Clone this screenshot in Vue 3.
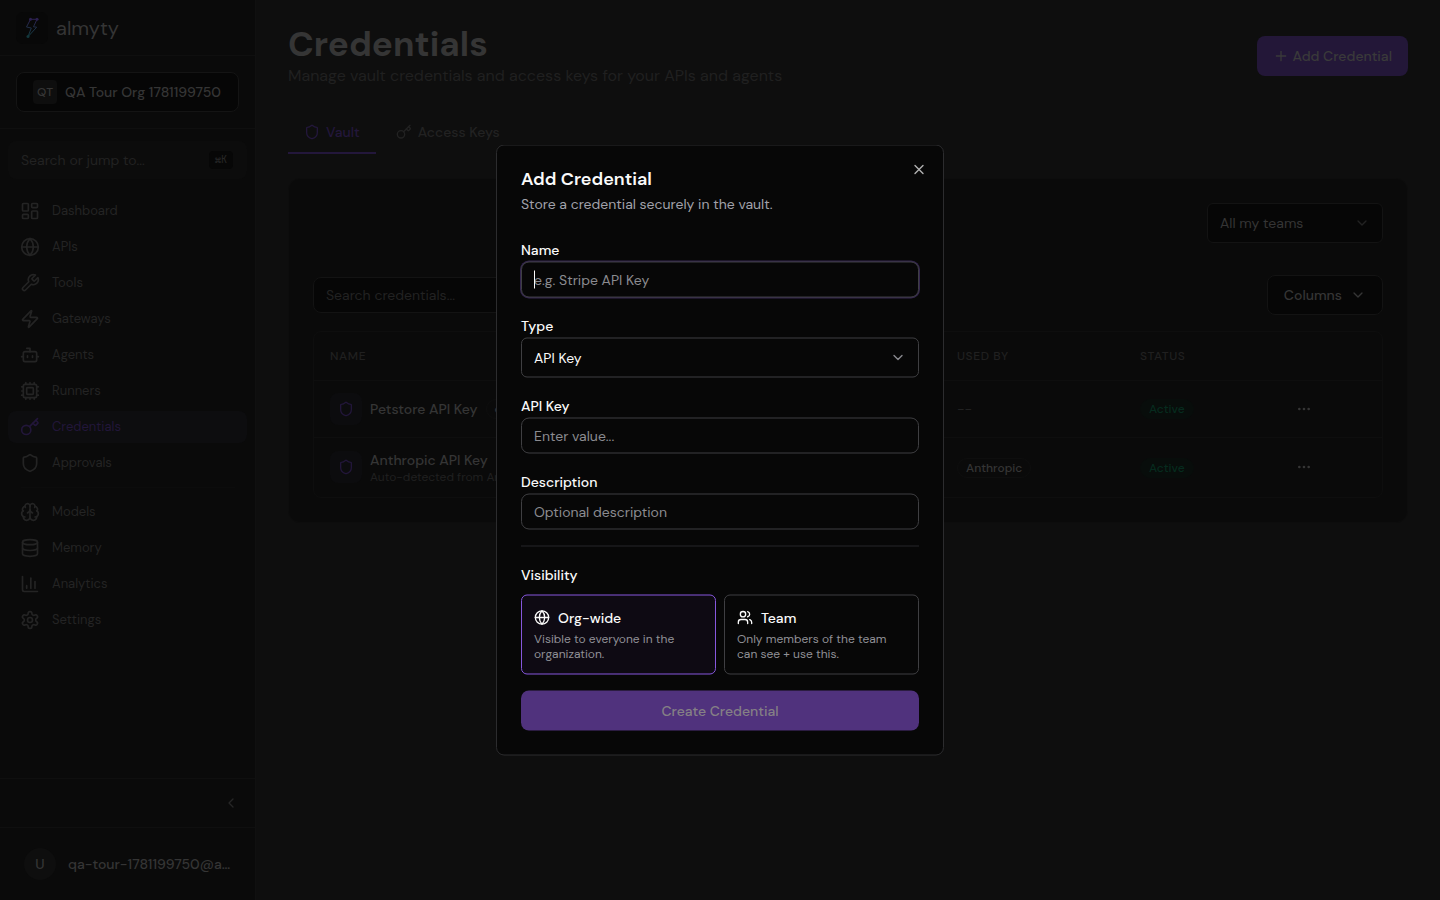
<template>
  <div class="app">
    <aside class="sidebar">
      <div class="brand">
        <svg class="brand-mark" viewBox="0 0 32 32" fill="none" stroke-width="1">
          <rect width="32" height="32" rx="7" fill="#080808" />
          <path d="M14.5 7.3H21L17.5 14.800 20.700 15.200 12 24.700 15.300 16 10.500 15Z" stroke="url(#bolt)" />
          <circle cx="14.500" cy="7.300" r="1.500" fill="#2b2050" />
          <circle cx="21" cy="7.300" r="1.500" fill="#2b2050" />
          <circle cx="12" cy="24.500" r="1.500" fill="#12383c" />
          <defs>
            <linearGradient id="bolt" x1="0" y1="0" x2="0" y2="1">
              <stop offset="0" stop-color="#2e2250" />
              <stop offset="1" stop-color="#113d40" />
            </linearGradient>
          </defs>
        </svg>
        <span class="brand-name">almyty</span>
      </div>

      <div class="org">
        <button class="org-button" type="button">
          <span class="org-badge">QT</span>
          <span>QA Tour Org 1781199750</span>
        </button>
      </div>

      <button class="jump" type="button">
        <span>Search or jump to...</span>
        <kbd>⌘K</kbd>
      </button>

      <nav class="nav">
        <template v-for="item in navItems" :key="item.label">
          <hr v-if="item.divider" />
          <a href="#" class="nav-link" :class="{ 'nav-link--active': item.active }">
            <svg class="icon icon--20" viewBox="0 0 24 24" v-html="icons[item.icon]"></svg>
            <span>{{ item.label }}</span>
          </a>
        </template>
      </nav>

      <div class="collapse">
        <button type="button" aria-label="Collapse sidebar">
          <svg class="icon icon--16" viewBox="0 0 24 24" v-html="icons.chevronLeft"></svg>
        </button>
      </div>

      <div class="user">
        <span class="avatar">U</span>
        <span class="user-name">qa-tour-1781199750@almyty.com</span>
      </div>
    </aside>

    <main class="main">
      <header class="page-header">
        <div>
          <h1>Credentials</h1>
          <p>Manage vault credentials and access keys for your APIs and agents</p>
        </div>
        <button class="add-button" type="button">
          <svg class="icon icon--16" viewBox="0 0 24 24" v-html="icons.plus"></svg>
          Add Credential
        </button>
      </header>

      <div class="tabs">
        <button class="tab tab--active" type="button">
          <svg class="icon icon--16" viewBox="0 0 24 24" v-html="icons.shield"></svg>
          Vault
        </button>
        <button class="tab" type="button">
          <svg class="icon icon--16" viewBox="0 0 24 24" v-html="icons.key"></svg>
          Access Keys
        </button>
      </div>

      <section class="card">
        <div class="select-wrap team-select">
          <select v-model="team" aria-label="Team">
            <option>All my teams</option>
          </select>
          <svg class="icon icon--16" viewBox="0 0 24 24" v-html="icons.chevronDown"></svg>
        </div>

        <div class="toolbar">
          <input v-model="search" type="text" placeholder="Search credentials..." aria-label="Search credentials" />
          <button class="columns-button" type="button">
            Columns
            <svg class="icon icon--16" viewBox="0 0 24 24" v-html="icons.chevronDown"></svg>
          </button>
        </div>

        <div class="table-wrap">
          <table>
            <colgroup>
              <col class="col-name" />
              <col class="col-used" />
              <col class="col-status" />
              <col />
            </colgroup>
            <thead>
              <tr>
                <th>Name</th>
                <th>Used by</th>
                <th>Status</th>
                <th></th>
              </tr>
            </thead>
            <tbody>
              <tr v-for="row in credentials" :key="row.name">
                <td>
                  <div class="cred">
                    <span class="cred-icon">
                      <svg class="icon icon--16" viewBox="0 0 24 24" v-html="icons.shield"></svg>
                    </span>
                    <div>
                      <div class="cred-name">
                        {{ row.name }}
                        <span v-if="row.scope" class="pill">{{ row.scope }}</span>
                      </div>
                      <div v-if="row.note" class="cred-note">{{ row.note }}</div>
                    </div>
                  </div>
                </td>
                <td>
                  <span v-if="row.usedBy" class="pill">{{ row.usedBy }}</span>
                  <span v-else class="muted">--</span>
                </td>
                <td><span class="pill pill--active">Active</span></td>
                <td>
                  <button class="more" type="button" aria-label="Actions">
                    <svg class="icon icon--16" viewBox="0 0 24 24" v-html="icons.more"></svg>
                  </button>
                </td>
              </tr>
            </tbody>
          </table>
        </div>
      </section>
    </main>

    <div class="dialog" role="dialog" aria-labelledby="dialog-title">
      <button class="close" type="button" aria-label="Close">
        <svg class="icon icon--16" viewBox="0 0 24 24" v-html="icons.x"></svg>
      </button>
      <h2 id="dialog-title">Add Credential</h2>
      <p class="dialog-text">Store a credential securely in the vault.</p>

      <form @submit.prevent>
        <div class="field">
          <label for="name">Name</label>
          <div class="name-box">
            <input
              id="name"
              ref="nameInput"
              v-model="form.name"
              type="text"
              placeholder="e.g. Stripe API Key"
              :class="{ empty: !form.name }"
            />
            <span v-if="!form.name" class="caret"></span>
          </div>
        </div>
        <div class="field">
          <label for="type">Type</label>
          <div class="select-wrap">
            <select id="type" v-model="form.type">
              <option>API Key</option>
            </select>
            <svg class="icon icon--16" viewBox="0 0 24 24" v-html="icons.chevronDown"></svg>
          </div>
        </div>
        <div class="field">
          <label for="value">API Key</label>
          <input id="value" v-model="form.value" type="password" placeholder="Enter value..." />
        </div>
        <div class="field">
          <label for="description">Description</label>
          <input id="description" v-model="form.description" type="text" placeholder="Optional description" />
        </div>

        <div class="visibility">
          <div id="visibility-label" class="visibility-label">Visibility</div>
          <div class="options" role="group" aria-labelledby="visibility-label">
            <button
              v-for="option in visibilityOptions"
              :key="option.id"
              type="button"
              class="option"
              :class="{ 'option--selected': form.visibility === option.id }"
              @click="form.visibility = option.id"
            >
              <span class="option-title">
                <svg class="icon icon--16" viewBox="0 0 24 24" v-html="icons[option.icon]"></svg>
                {{ option.title }}
              </span>
              <span class="option-text">{{ option.text }}</span>
            </button>
          </div>
        </div>

        <button class="submit" type="submit" :disabled="!form.name || !form.value">Create Credential</button>
      </form>
    </div>
  </div>
</template>

<script setup>
import { ref, reactive, onMounted } from 'vue'

const icons = {
  dashboard: '<rect width="7" height="9" x="3" y="3" rx="1"/><rect width="7" height="5" x="14" y="3" rx="1"/><rect width="7" height="9" x="14" y="12" rx="1"/><rect width="7" height="5" x="3" y="16" rx="1"/>',
  globe: '<circle cx="12" cy="12" r="10"/><path d="M12 2a14.5 14.5 0 0 0 0 20 14.5 14.5 0 0 0 0-20"/><path d="M2 12h20"/>',
  wrench: '<path d="M14.7 6.3a1 1 0 0 0 0 1.4l1.6 1.6a1 1 0 0 0 1.4 0l3.77-3.77a6 6 0 0 1-7.94 7.94l-6.91 6.91a2.12 2.12 0 0 1-3-3l6.91-6.91a6 6 0 0 1 7.94-7.94l-3.76 3.76z"/>',
  zap: '<path d="M4 14a1 1 0 0 1-.78-1.63l9.9-10.2a.5.5 0 0 1 .86.46l-1.92 6.02A1 1 0 0 0 13 10h7a1 1 0 0 1 .78 1.63l-9.9 10.2a.5.5 0 0 1-.86-.46l1.92-6.02A1 1 0 0 0 11 14z"/>',
  bot: '<path d="M12 8V4H8"/><rect width="16" height="12" x="4" y="8" rx="2"/><path d="M2 14h2"/><path d="M20 14h2"/><path d="M15 13v2"/><path d="M9 13v2"/>',
  cpu: '<rect width="16" height="16" x="4" y="4" rx="2"/><rect width="8" height="8" x="8" y="8" rx="1"/><path d="M12 20v2M12 2v2M17 20v2M17 2v2M2 12h2M2 17h2M2 7h2M20 12h2M20 17h2M20 7h2M7 20v2M7 2v2"/>',
  key: '<path d="m15.5 7.5 2.3 2.3a1 1 0 0 0 1.4 0l2.1-2.1a1 1 0 0 0 0-1.4L19 4"/><path d="m21 2-9.6 9.6"/><circle cx="7.5" cy="15.5" r="5.500"/>',
  shield: '<path d="M20 13c0 5-3.5 7.5-7.66 8.95a1 1 0 0 1-.67-.01C7.5 20.5 4 18 4 13V6a1 1 0 0 1 1-1c2 0 4.5-1.2 6.24-2.72a1.17 1.17 0 0 1 1.52 0C14.51 3.81 17 5 19 5a1 1 0 0 1 1 1z"/>',
  brain: '<path d="M12 18V5"/><path d="M15 13a4.17 4.17 0 0 1-3-4 4.17 4.17 0 0 1-3 4"/><path d="M17.598 6.5A3 3 0 1 0 12 5a3 3 0 1 0-5.598 1.5"/><path d="M17.997 5.125a4 4 0 0 1 2.526 5.77"/><path d="M18 18a4 4 0 0 0 2-7.464"/><path d="M19.967 17.483A4 4 0 1 1 12 18a4 4 0 1 1-7.967-.517"/><path d="M6 18a4 4 0 0 1-2-7.464"/><path d="M6.003 5.125a4 4 0 0 0-2.526 5.77"/>',
  database: '<ellipse cx="12" cy="5" rx="9" ry="3"/><path d="M3 5V19A9 3 0 0 0 21 19V5"/><path d="M3 12A9 3 0 0 0 21 12"/>',
  chart: '<path d="M3 3v16a2 2 0 0 0 2 2h16"/><path d="M18 17V9"/><path d="M13 17V5"/><path d="M8 17v-3"/>',
  settings: '<path d="M12.22 2h-.44a2 2 0 0 0-2 2v.18a2 2 0 0 1-1 1.73l-.43.25a2 2 0 0 1-2 0l-.15-.08a2 2 0 0 0-2.73.73l-.22.38a2 2 0 0 0 .73 2.73l.15.1a2 2 0 0 1 1 1.72v.51a2 2 0 0 1-1 1.74l-.15.09a2 2 0 0 0-.73 2.73l.22.38a2 2 0 0 0 2.73.73l.15-.08a2 2 0 0 1 2 0l.43.25a2 2 0 0 1 1 1.73V20a2 2 0 0 0 2 2h.44a2 2 0 0 0 2-2v-.18a2 2 0 0 1 1-1.73l.43-.25a2 2 0 0 1 2 0l.15.08a2 2 0 0 0 2.73-.73l.22-.39a2 2 0 0 0-.73-2.73l-.15-.08a2 2 0 0 1-1-1.74v-.5a2 2 0 0 1 1-1.74l.15-.09a2 2 0 0 0 .73-2.73l-.22-.38a2 2 0 0 0-2.73-.73l-.15.08a2 2 0 0 1-2 0l-.43-.25a2 2 0 0 1-1-1.73V4a2 2 0 0 0-2-2z"/><circle cx="12" cy="12" r="3"/>',
  users: '<path d="M16 21v-2a4 4 0 0 0-4-4H6a4 4 0 0 0-4 4v2"/><circle cx="9" cy="7" r="4"/><path d="M22 21v-2a4 4 0 0 0-3-3.87"/><path d="M16 3.13a4 4 0 0 1 0 7.75"/>',
  chevronLeft: '<path d="m15 18-6-6 6-6"/>',
  chevronDown: '<path d="m6 9 6 6 6-6"/>',
  plus: '<path d="M5 12h14M12 5v14"/>',
  x: '<path d="M18 6 6 18M6 6l12 12"/>',
  more: '<circle cx="12" cy="12" r="1"/><circle cx="19" cy="12" r="1"/><circle cx="5" cy="12" r="1"/>'
}

const navItems = [
  { label: 'Dashboard', icon: 'dashboard' },
  { label: 'APIs', icon: 'globe' },
  { label: 'Tools', icon: 'wrench' },
  { label: 'Gateways', icon: 'zap' },
  { label: 'Agents', icon: 'bot' },
  { label: 'Runners', icon: 'cpu' },
  { label: 'Credentials', icon: 'key', active: true },
  { label: 'Approvals', icon: 'shield' },
  { label: 'Models', icon: 'brain', divider: true },
  { label: 'Memory', icon: 'database' },
  { label: 'Analytics', icon: 'chart' },
  { label: 'Settings', icon: 'settings' }
]

const credentials = [
  { name: 'Petstore API Key', scope: 'org' },
  { name: 'Anthropic API Key', note: 'Auto-detected from Anthropic', usedBy: 'Anthropic' }
]

const visibilityOptions = [
  { id: 'org', icon: 'globe', title: 'Org-wide', text: 'Visible to everyone in the organization.' },
  { id: 'team', icon: 'users', title: 'Team', text: 'Only members of the team can see + use this.' }
]

const team = ref('All my teams')
const search = ref('')
const nameInput = ref(null)

const form = reactive({
  name: '',
  type: 'API Key',
  value: '',
  description: '',
  visibility: 'org'
})

onMounted(() => {
  nameInput.value.focus()
})
</script>

<style>
body {
  margin: 0;
  background: #0e0e0e;
}
</style>

<style scoped>
* {
  box-sizing: border-box;
}

.app {
  display: flex;
  min-height: 100vh;
  background: #0e0e0e;
  color: #353535;
  font-family: "DM Sans", Roboto, sans-serif;
  font-size: 14px;
  line-height: 20px;
}

button,
input,
select {
  font: inherit;
  color: inherit;
}

button {
  padding: 0;
  border: 0;
  background: none;
}

h1,
h2,
p {
  margin: 0;
}

.icon {
  flex-shrink: 0;
  fill: none;
  stroke: currentColor;
  stroke-width: 2;
  stroke-linecap: round;
  stroke-linejoin: round;
}

.icon--20 {
  width: 20px;
  height: 20px;
}

.icon--16 {
  width: 16px;
  height: 16px;
}

/* Sidebar */
.sidebar {
  display: flex;
  flex-direction: column;
  width: 256px;
  flex-shrink: 0;
  border-right: 1px solid #101010;
  background: #0a0a0a;
}

.brand {
  display: flex;
  align-items: center;
  gap: 8px;
  height: 56px;
  padding: 0 16px;
  border-bottom: 1px solid #0f0f0f;
}

.brand-mark {
  width: 32px;
  height: 32px;
}

.brand-name {
  font-size: 20px;
  line-height: 28px;
}

.org {
  padding: 16px;
  border-bottom: 1px solid #0f0f0f;
}

.org-button {
  display: flex;
  align-items: center;
  gap: 8px;
  width: 100%;
  height: 40px;
  padding: 0 16px;
  border: 1px solid #141414;
  border-radius: 8px;
  background: #060606;
  font-weight: 500;
}

.org-badge {
  display: grid;
  place-items: center;
  width: 24px;
  height: 24px;
  border-radius: 4px;
  background: #0e0e0e;
  font-size: 12px;
}

.jump {
  display: flex;
  align-items: center;
  justify-content: space-between;
  height: 38px;
  margin: 12px 8px 16px;
  padding: 0 14px 0 13px;
  border-radius: 8px;
  background: #0c0c0c;
  color: #222222;
}

.jump kbd {
  padding: 0 6px;
  border-radius: 4px;
  background: #070707;
  color: #282828;
  font-family: "JetBrains Mono", "Liberation Mono", monospace;
  font-size: 10px;
  line-height: 18px;
}

.nav {
  display: flex;
  flex-direction: column;
  gap: 4px;
  flex: 1;
  padding: 0 8px;
}

.nav hr {
  width: 214px;
  margin: 4px auto;
  border: 0;
  border-top: 1px solid #0c0c0c;
}

.nav-link {
  display: flex;
  align-items: center;
  gap: 12px;
  height: 32px;
  padding: 0 12px;
  border-radius: 8px;
  color: #242424;
  font-size: 13px;
  text-decoration: none;
}

.nav-link--active {
  background: #0d0d0f;
  color: #22163a;
}

.collapse {
  display: flex;
  justify-content: flex-end;
  align-items: center;
  height: 49px;
  padding: 0 16px;
  border-top: 1px solid #0f0f0f;
  color: #262626;
}

.collapse svg {
  display: block;
}

.user {
  display: flex;
  align-items: center;
  gap: 12px;
  height: 73px;
  padding: 0 24px;
  border-top: 1px solid #0f0f0f;
}

.avatar {
  display: grid;
  place-items: center;
  flex-shrink: 0;
  width: 32px;
  height: 32px;
  border-radius: 50%;
  background: #0e0e0e;
  font-weight: 500;
}

.user-name {
  overflow: hidden;
  text-overflow: ellipsis;
  white-space: nowrap;
  font-weight: 500;
}

/* Page */
.main {
  flex: 1;
  min-width: 0;
  padding: 24px 32px;
}

.page-header {
  display: flex;
  justify-content: space-between;
  align-items: center;
  margin-bottom: 24px;
}

h1 {
  font-size: 35px;
  font-weight: 700;
  line-height: 40px;
}

.page-header p {
  color: #202020;
  font-size: 16px;
  line-height: 24px;
}

.add-button {
  display: flex;
  align-items: center;
  gap: 4px;
  height: 40px;
  padding: 0 16px;
  border-radius: 8px;
  background: #231738;
  color: #3a3a3a;
  font-weight: 500;
}

.tabs {
  display: flex;
  gap: 4px;
  margin-bottom: 24px;
}

.tab {
  display: flex;
  align-items: center;
  gap: 6px;
  height: 42px;
  padding: 0 16px;
  border-bottom: 2px solid transparent;
  color: #222222;
  font-weight: 500;
}

.tab--active {
  border-color: #23173b;
  color: #23173b;
}

.card {
  padding: 24px;
  border: 1px solid #0d0d0d;
  border-radius: 12px;
  background: #0a0a0a;
}

.select-wrap {
  display: grid;
  align-items: center;
}

.select-wrap select {
  grid-area: 1 / 1;
  width: 100%;
  height: 40px;
  padding: 0 12px;
  border: 1px solid #3f3f42;
  border-radius: 6px;
  outline: none;
  background: #070707;
  appearance: none;
}

.select-wrap svg {
  grid-area: 1 / 1;
  justify-self: end;
  margin-right: 13px;
  pointer-events: none;
}

.team-select {
  width: 176px;
  margin: 0 0 32px auto;
}

.team-select select {
  border-color: #131313;
  background: #060606;
}

.team-select svg {
  color: #222222;
}

.toolbar {
  display: flex;
  justify-content: space-between;
  align-items: center;
  margin-bottom: 16px;
}

.toolbar input {
  width: 384px;
  height: 36px;
  padding: 0 12px;
  border: 1px solid #131313;
  border-radius: 8px;
  background: #060606;
}

.toolbar input::placeholder {
  color: #222222;
}

.columns-button {
  display: flex;
  align-items: center;
  gap: 8px;
  height: 40px;
  padding: 0 16px;
  border: 1px solid #131313;
  border-radius: 8px;
  background: #060606;
  font-weight: 500;
}

.table-wrap {
  border: 1px solid #0e0e0e;
  border-radius: 8px;
}

table {
  width: 100%;
  border-collapse: collapse;
  table-layout: fixed;
}

.col-name {
  width: 627px;
}

.col-used {
  width: 183px;
}

.col-status {
  width: 148px;
}

th {
  height: 48px;
  padding: 0 16px;
  border-bottom: 1px solid #0e0e0e;
  color: #202020;
  font-size: 12px;
  font-weight: 500;
  letter-spacing: 0.05em;
  text-align: left;
  text-transform: uppercase;
}

td {
  height: 57px;
  padding: 0 16px;
}

tbody tr + tr td {
  height: 60px;
  border-top: 1px solid #0e0e0e;
}

.cred {
  display: flex;
  align-items: center;
  gap: 8px;
}

.cred-icon {
  display: grid;
  place-items: center;
  width: 32px;
  height: 32px;
  border-radius: 8px;
  background: #0c0c0e;
  color: #22163a;
}

.cred-name {
  display: flex;
  align-items: center;
  gap: 8px;
  font-weight: 500;
}

.cred-note {
  color: #202020;
  font-size: 12px;
  line-height: 14px;
}

.pill {
  display: inline-block;
  padding: 0 8px;
  border: 1px solid #0e0e0e;
  border-radius: 10px;
  font-size: 12px;
  font-weight: 500;
  line-height: 18px;
}

.pill--active {
  border-color: #080d0b;
  background: #080d0b;
  color: #062b1e;
}

.muted {
  color: #222222;
}

.more {
  display: grid;
  place-items: center;
  width: 32px;
  height: 32px;
}

/* Dialog */
.dialog {
  position: fixed;
  top: 50%;
  left: 50%;
  width: 448px;
  max-width: 100%;
  padding: 24px;
  border: 1px solid #2c2c2e;
  border-radius: 8px;
  background: #070707;
  color: #fafafa;
  transform: translate(-50%, -50%);
}

.close {
  position: absolute;
  top: 16px;
  right: 16px;
  color: #b4b4b4;
}

.close svg {
  display: block;
}

h2 {
  margin-bottom: 6px;
  font-size: 18px;
  font-weight: 600;
  line-height: 18px;
}

.dialog-text {
  margin-bottom: 24px;
  color: #a1a1aa;
}

form {
  display: flex;
  flex-direction: column;
  gap: 16px;
}

.field label,
.visibility-label {
  display: block;
  font-weight: 500;
  line-height: 24px;
}

.field input {
  display: block;
  width: 100%;
  height: 36px;
  padding: 0 12px;
  border: 1px solid #3f3f42;
  border-radius: 8px;
  outline: none;
  background: #070707;
}

.field input:focus {
  box-shadow: 0 0 0 1px #34264f;
}

.field input::placeholder {
  color: #8b8b90;
}

.field .icon {
  color: #8b8b90;
}

.name-box {
  position: relative;
}

.name-box .empty {
  caret-color: transparent;
}

.caret {
  display: none;
  position: absolute;
  top: 9px;
  left: 13px;
  width: 1px;
  height: 18px;
  background: #fafafa;
}

.name-box input:focus + .caret {
  display: block;
}

.visibility {
  padding-top: 16px;
  border-top: 1px solid #26262b;
}

.options {
  display: grid;
  grid-template-columns: 1fr 1fr;
  gap: 8px;
  margin-top: 8px;
}

.option {
  display: flex;
  flex-direction: column;
  gap: 4px;
  padding: 12px;
  border: 1px solid #3f3f42;
  border-radius: 6px;
  text-align: left;
}

.option--selected {
  border-color: #8657dd;
  background: #0e0a13;
}

.option-title {
  display: flex;
  align-items: center;
  gap: 8px;
  font-weight: 500;
}

.option-text {
  color: #909096;
  font-size: 12px;
  line-height: 15px;
}

.submit {
  height: 40px;
  border-radius: 8px;
  background: #50327d;
  color: #858085;
  font-weight: 500;
}
</style>
